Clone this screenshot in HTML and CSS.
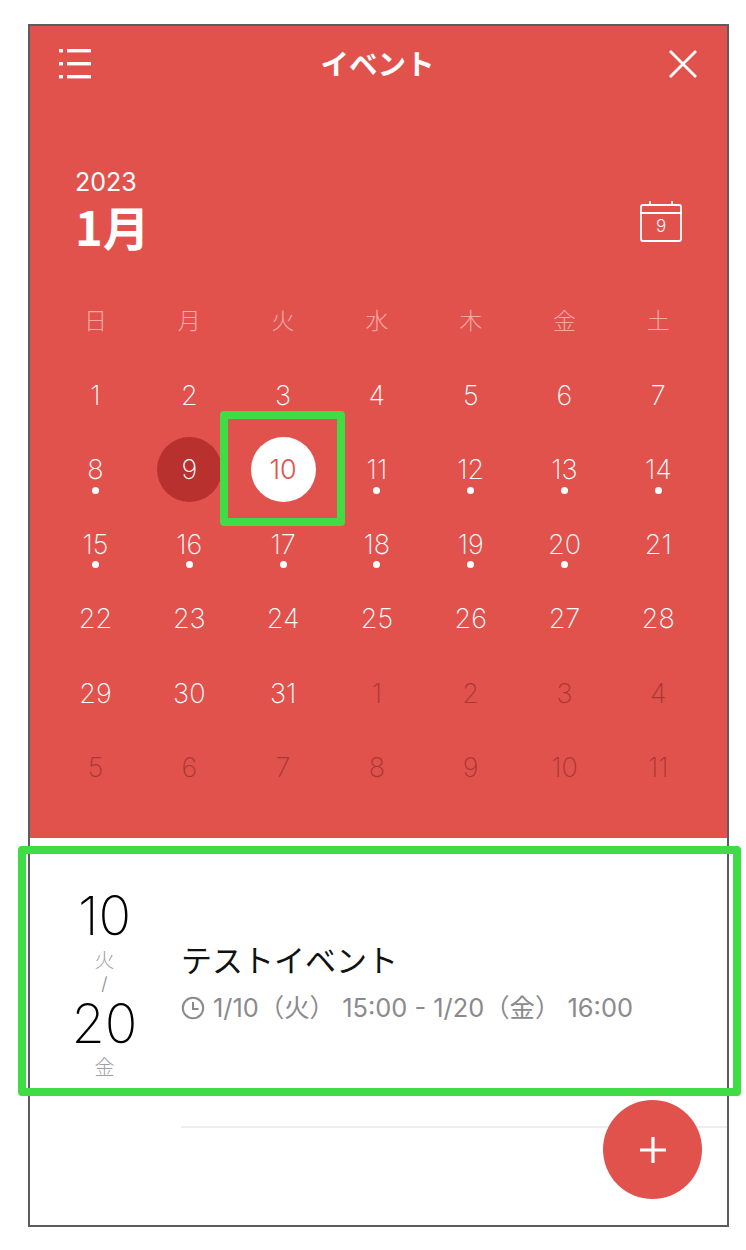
FILE: index.html
```html
<!DOCTYPE html>
<html lang="ja">
<head>
<meta charset="utf-8">
<title>イベント</title>
<link rel="stylesheet" href="styles.css">
</head>
<body>
<div class="frame">
  <section class="cal">
    <header class="top">
      <svg class="ico-menu" viewBox="0 0 32 30" width="32" height="30"><g fill="#fff"><rect x="0" y="0" width="4" height="3.4"/><rect x="0" y="13" width="4" height="3.4"/><rect x="0" y="26" width="4" height="3.4"/><rect x="8" y="0" width="24" height="3.4"/><rect x="8" y="13" width="24" height="3.4"/><rect x="8" y="26" width="24" height="3.4"/></g></svg>
      <h1 class="title">イベント</h1>
      <svg class="ico-close" viewBox="0 0 30 30" width="30" height="30"><path d="M2 2 L28 28 M28 2 L2 28" stroke="#fff" stroke-width="2.8" fill="none"/></svg>
    </header>
    <div class="month-row">
      <div class="month-text">
        <div class="year">2023</div>
        <div class="month">1月</div>
      </div>
      <div class="today-ico">
        <svg viewBox="0 0 42 42" width="42" height="42"><path d="M3 5 H39 Q41 5 41 7 V39 Q41 41 39 41 H3 Q1 41 1 39 V7 Q1 5 3 5 Z M1 13 H41 M10 1 V5 M32 1 V5" stroke="#fff" stroke-width="1.8" fill="none"/></svg>
        <span class="today-num">9</span>
      </div>
    </div>
    <div class="grid">
      <div class="wd">日</div><div class="wd">月</div><div class="wd">火</div><div class="wd">水</div><div class="wd">木</div><div class="wd">金</div><div class="wd">土</div>
      <div class="d">1</div><div class="d">2</div><div class="d">3</div><div class="d">4</div><div class="d">5</div><div class="d">6</div><div class="d">7</div>
      <div class="d dot">8</div><div class="d"><span class="yesterday">9</span></div><div class="d"><span class="sel">10</span></div><div class="d dot">11</div><div class="d dot">12</div><div class="d dot">13</div><div class="d dot">14</div>
      <div class="d dot">15</div><div class="d dot">16</div><div class="d dot">17</div><div class="d dot">18</div><div class="d dot">19</div><div class="d dot">20</div><div class="d">21</div>
      <div class="d">22</div><div class="d">23</div><div class="d">24</div><div class="d">25</div><div class="d">26</div><div class="d">27</div><div class="d">28</div>
      <div class="d">29</div><div class="d">30</div><div class="d">31</div><div class="d off">1</div><div class="d off">2</div><div class="d off">3</div><div class="d off">4</div>
      <div class="d off">5</div><div class="d off">6</div><div class="d off">7</div><div class="d off">8</div><div class="d off">9</div><div class="d off">10</div><div class="d off">11</div>
    </div>
  </section>
  <section class="event">
    <div class="dates">
      <div class="big">10</div>
      <div class="wk wk-first">火</div>
      <div class="sep">/</div>
      <div class="big big-second">20</div>
      <div class="wk wk-last">金</div>
    </div>
    <div class="info">
      <div class="name">テストイベント</div>
      <div class="meta">
        <svg viewBox="0 0 24 24" width="24" height="24"><circle cx="12" cy="12" r="10.2" stroke="#8a8a8e" stroke-width="2" fill="none"/><path d="M12 6 V13 H17.5" stroke="#8a8a8e" stroke-width="2" fill="none"/></svg>
        <span>1/10（火） 15:00 - 1/20（金） 16:00</span>
      </div>
    </div>
  </section>
  <button class="fab" aria-label="追加"><svg viewBox="0 0 26 26" width="26" height="26"><path d="M13 0 V26 M0 13 H26" stroke="#fff" stroke-width="3.2"/></svg></button>
  <div class="mark mark-day"></div>
  <div class="mark mark-event"></div>
</div>
</body>
</html>
```
FILE: styles.css
```css
* { box-sizing: border-box; }
html, body { margin: 0; padding: 0; background: #fff; }
body {
  width: 746px;
  height: 1250px;
  padding: 24px 0 0 28px;
  font-family: Inter, "Noto Sans CJK JP", sans-serif;
  overflow: hidden;
}
.frame {
  position: relative;
  width: 701px;
  height: 1203px;
  border: 2px solid #5c5c60;
  background: #fff;
}
.cal {
  height: 812px;
  background: #e1524d;
  color: #fff;
}
.top {
  height: 76px;
  padding: 23px 29px 0 29px;
  display: flex;
  align-items: flex-start;
  justify-content: space-between;
}
.title {
  margin: -1px 0 0;
  font: 700 28.5px/30px "Noto Sans CJK JP", sans-serif;
  transform: translateX(-2px);
}
.month-row {
  height: 181px;
  padding: 66px 45px 0 45px;
  display: flex;
  justify-content: space-between;
  align-items: flex-start;
}
.year { font: 400 25px/28px Inter, sans-serif; }
.month {
  font: 700 47px/52px "Noto Sans CJK JP", sans-serif;
  margin-top: 4px;
}
.today-ico {
  position: relative;
  width: 42px;
  height: 42px;
  margin-top: 32px;
}
.today-ico svg { display: block; }
.today-num {
  position: absolute;
  left: 0; right: 0; top: 15px;
  text-align: center;
  font: 300 17px/22px Inter, sans-serif;
}
.grid {
  display: grid;
  grid-template-columns: repeat(7, 93.8px);
  grid-auto-rows: 74.4px;
  padding-left: 18.6px;
  margin-top: 1px;
}
.wd, .d {
  position: relative;
  display: flex;
  align-items: center;
  justify-content: center;
}
.wd {
  font: 300 23px/1 "Noto Sans CJK JP", sans-serif;
  color: #f5a9a5;
  padding-bottom: 3px;
}
.d {
  font: 200 27px/1 Inter, sans-serif;
  color: #fff;
}
.d.off { color: #a93733; }
.dot::after {
  content: "";
  position: absolute;
  left: 50%;
  top: 54px;
  width: 7px;
  height: 7px;
  margin-left: -3.5px;
  border-radius: 50%;
  background: #fff;
}
.yesterday, .sel {
  width: 65px;
  height: 65px;
  border-radius: 50%;
  display: flex;
  align-items: center;
  justify-content: center;
}
.yesterday { background: #b8312e; }
.sel { background: #fff; color: #e1524d; font-weight: 300; }
.event {
  height: 290px;
  display: flex;
  position: relative;
  padding-top: 58px;
}
.event::after {
  content: "";
  position: absolute;
  left: 151px;
  right: 0;
  top: 288px;
  height: 2px;
  background: #eeeef2;
}
.dates {
  width: 149px;
  text-align: center;
  color: #000;
}
.big { font: 200 54px/40px Inter, sans-serif; }
.big-second { margin-top: 10px; }
.wk {
  font: 300 20px/24px "Noto Sans CJK JP", sans-serif;
  color: #a0a0a4;
}
.wk-first { margin-top: 12px; }
.wk-last { margin-top: 11px; }
.sep {
  font: 300 18px/20px Inter, sans-serif;
  color: #8a8a8e;
  margin-top: 2px;
}
.info { padding-top: 41px; padding-left: 2px; }
.name {
  font: 400 31px/44px "Noto Sans CJK JP", sans-serif;
  color: #111;
}
.meta {
  display: flex;
  align-items: center;
  gap: 8px;
  margin-top: 9px;
  font: 400 25.4px/36px Inter, "Noto Sans CJK JP", sans-serif;
  color: #8a8a8e;
  white-space: nowrap;
}
.fab {
  position: absolute;
  left: 573px;
  top: 1074px;
  width: 99px;
  height: 99px;
  border: 0;
  padding: 0;
  border-radius: 50%;
  background: #e1524d;
  display: flex;
  align-items: center;
  justify-content: center;
}
.fab svg { display: block; }
.mark {
  position: absolute;
  border: 8px solid #3fdc46;
  border-radius: 4px;
}
.mark-day { left: 190px; top: 385px; width: 125px; height: 115px; }
.mark-event { left: -12px; top: 820px; width: 723px; height: 250px; }
```
